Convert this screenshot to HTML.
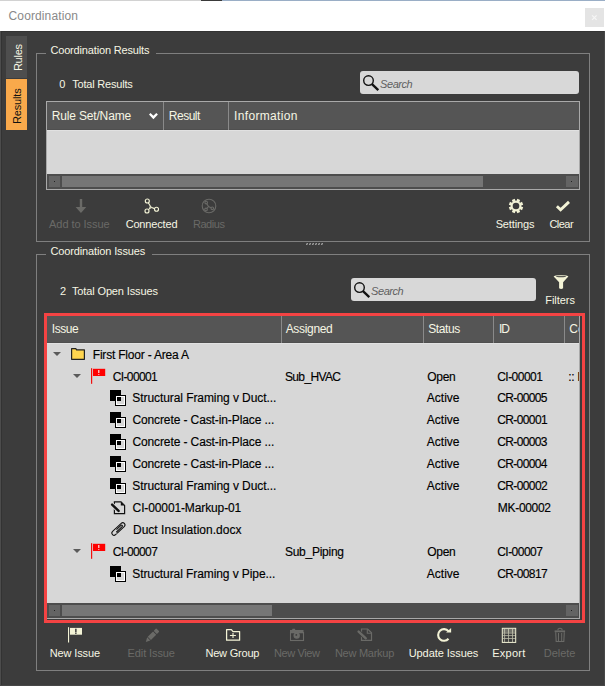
<!DOCTYPE html>
<html><head><meta charset="utf-8"><style>
html,body{margin:0;padding:0;width:605px;height:686px;overflow:hidden;background:#3c3c3c;}
.r{position:absolute;}
svg.r{overflow:visible;}
.t{position:absolute;font-family:"Liberation Sans",sans-serif;line-height:20px;white-space:pre;}
</style></head><body>
<div class="r" style="left:0px;top:0px;width:605px;height:31px;background:#ffffff;"></div>
<div class="r" style="left:0px;top:0px;width:201px;height:1px;background:#d2d2d2;"></div>
<div class="r" style="left:201px;top:0px;width:21px;height:1px;background:#3a3a3a;"></div>
<div class="r" style="left:222px;top:0px;width:383px;height:1px;background:#9aaec6;"></div>
<div class="r" style="left:585px;top:8px;width:19px;height:19px;background:#e4e4e4;"></div>
<svg class="r" style="left:585px;top:8px" width="19" height="19"><path d="M7.1 7.3 L11.6 11.8 M11.6 7.3 L7.1 11.8" stroke="#f6f6f6" stroke-width="1.2"/></svg>
<div class="r" style="left:0px;top:31px;width:605px;height:655px;background:#3c3c3c;"></div>
<div class="r" style="left:0px;top:31px;width:605px;height:1px;background:#333333;"></div>
<div class="r" style="left:0px;top:31px;width:1px;height:655px;background:#4c4c4c;"></div>
<div class="r" style="left:1px;top:32px;width:1px;height:654px;background:#333333;"></div>
<div class="r" style="left:604px;top:31px;width:1px;height:655px;background:#474747;"></div>
<div class="r" style="left:0px;top:685px;width:605px;height:1px;background:#474747;"></div>
<div class="r" style="left:6px;top:36px;width:21px;height:42px;background:#4e4e4e;"></div>
<div class="r" style="left:6px;top:79px;width:21px;height:51px;background:#f9a94b;"></div>
<div class="r" style="left:36px;top:53px;width:10px;height:1px;background:#7f7f7f;"></div>
<div class="r" style="left:156px;top:53px;width:434px;height:1px;background:#7f7f7f;"></div>
<div class="r" style="left:36px;top:53px;width:1px;height:189px;background:#7f7f7f;"></div>
<div class="r" style="left:589px;top:53px;width:1px;height:189px;background:#7f7f7f;"></div>
<div class="r" style="left:36px;top:241px;width:554px;height:1px;background:#7f7f7f;"></div>
<div class="r" style="left:36px;top:254px;width:10px;height:1px;background:#7f7f7f;"></div>
<div class="r" style="left:152px;top:254px;width:438px;height:1px;background:#7f7f7f;"></div>
<div class="r" style="left:36px;top:254px;width:1px;height:417px;background:#7f7f7f;"></div>
<div class="r" style="left:589px;top:254px;width:1px;height:417px;background:#7f7f7f;"></div>
<div class="r" style="left:36px;top:670px;width:554px;height:1px;background:#7f7f7f;"></div>
<div class="r" style="left:306px;top:243px;width:2px;height:2px;background:#6e6e6e;"></div>
<div class="r" style="left:307px;top:243px;width:1px;height:1px;background:#9a9a9a;"></div>
<div class="r" style="left:306px;top:244px;width:1px;height:1px;background:#9a9a9a;"></div>
<div class="r" style="left:309px;top:243px;width:2px;height:2px;background:#6e6e6e;"></div>
<div class="r" style="left:310px;top:243px;width:1px;height:1px;background:#9a9a9a;"></div>
<div class="r" style="left:309px;top:244px;width:1px;height:1px;background:#9a9a9a;"></div>
<div class="r" style="left:312px;top:243px;width:2px;height:2px;background:#6e6e6e;"></div>
<div class="r" style="left:313px;top:243px;width:1px;height:1px;background:#9a9a9a;"></div>
<div class="r" style="left:312px;top:244px;width:1px;height:1px;background:#9a9a9a;"></div>
<div class="r" style="left:315px;top:243px;width:2px;height:2px;background:#6e6e6e;"></div>
<div class="r" style="left:316px;top:243px;width:1px;height:1px;background:#9a9a9a;"></div>
<div class="r" style="left:315px;top:244px;width:1px;height:1px;background:#9a9a9a;"></div>
<div class="r" style="left:318px;top:243px;width:2px;height:2px;background:#6e6e6e;"></div>
<div class="r" style="left:319px;top:243px;width:1px;height:1px;background:#9a9a9a;"></div>
<div class="r" style="left:318px;top:244px;width:1px;height:1px;background:#9a9a9a;"></div>
<div class="r" style="left:321px;top:243px;width:2px;height:2px;background:#6e6e6e;"></div>
<div class="r" style="left:322px;top:243px;width:1px;height:1px;background:#9a9a9a;"></div>
<div class="r" style="left:321px;top:244px;width:1px;height:1px;background:#9a9a9a;"></div>
<div class="r" style="left:360px;top:71px;width:219px;height:23px;background:#d8d8d8;border-radius:3px;"></div>
<svg class="r" style="left:360px;top:71px" width="24" height="23"><circle cx="8.5" cy="9.6" r="4.8" fill="none" stroke="#111" stroke-width="1.4"/><path d="M12 13.2 L18.3 19.2" stroke="#111" stroke-width="2.3" stroke-linecap="butt"/></svg>
<div class="r" style="left:351px;top:278px;width:185px;height:23px;background:#d8d8d8;border-radius:3px;"></div>
<svg class="r" style="left:351px;top:278px" width="24" height="23"><circle cx="8.5" cy="9.6" r="4.8" fill="none" stroke="#111" stroke-width="1.4"/><path d="M12 13.2 L18.3 19.2" stroke="#111" stroke-width="2.3" stroke-linecap="butt"/></svg>
<div class="r" style="left:46px;top:101px;width:534px;height:1px;background:#a9a9a9;"></div>
<div class="r" style="left:46px;top:189px;width:534px;height:1px;background:#a9a9a9;"></div>
<div class="r" style="left:46px;top:101px;width:1px;height:89px;background:#a9a9a9;"></div>
<div class="r" style="left:579px;top:101px;width:1px;height:89px;background:#a9a9a9;"></div>
<div class="r" style="left:47px;top:102px;width:532px;height:28px;background:#555555;"></div>
<div class="r" style="left:47px;top:130px;width:532px;height:44px;background:#d7d7d7;"></div>
<div class="r" style="left:47px;top:130px;width:532px;height:1px;background:#e1e1e1;"></div>
<div class="r" style="left:47px;top:129px;width:532px;height:1px;background:#4f4f4f;"></div>
<div class="r" style="left:47px;top:174px;width:532px;height:15px;background:#4d4d4d;"></div>
<div class="r" style="left:49px;top:176px;width:11px;height:11px;background:#646464;"></div>
<div class="r" style="left:54px;top:181px;width:1px;height:1px;background:#222;"></div>
<div class="r" style="left:62px;top:176px;width:421px;height:11px;background:#767676;"></div>
<div class="r" style="left:566px;top:176px;width:12px;height:11px;background:#646464;"></div>
<div class="r" style="left:571px;top:181px;width:1px;height:1px;background:#222;"></div>
<div class="r" style="left:163px;top:102px;width:1px;height:28px;background:#8a8a8a;"></div>
<div class="r" style="left:228px;top:102px;width:1px;height:28px;background:#8a8a8a;"></div>
<svg class="r" style="left:144px;top:108px" width="20" height="16"><path d="M5 6.5 L6.5 5 L9.4 7.8 L12.3 5 L13.9 6.5 L9.4 11.2 Z" fill="#fff"/></svg>
<div class="r" style="left:46px;top:315px;width:534px;height:1px;background:#a9a9a9;"></div>
<div class="r" style="left:46px;top:618px;width:534px;height:1px;background:#a9a9a9;"></div>
<div class="r" style="left:46px;top:315px;width:1px;height:304px;background:#a9a9a9;"></div>
<div class="r" style="left:579px;top:315px;width:1px;height:304px;background:#a9a9a9;"></div>
<div class="r" style="left:47px;top:316px;width:532px;height:27px;background:#555555;"></div>
<div class="r" style="left:47px;top:343px;width:532px;height:260px;background:#d7d7d7;"></div>
<div class="r" style="left:47px;top:343px;width:532px;height:1px;background:#e1e1e1;"></div>
<div class="r" style="left:47px;top:342px;width:532px;height:1px;background:#4f4f4f;"></div>
<div class="r" style="left:47px;top:603px;width:532px;height:15px;background:#4d4d4d;"></div>
<div class="r" style="left:49px;top:605px;width:11px;height:11px;background:#646464;"></div>
<div class="r" style="left:54px;top:610px;width:1px;height:1px;background:#222;"></div>
<div class="r" style="left:62px;top:605px;width:210px;height:11px;background:#767676;"></div>
<div class="r" style="left:566px;top:605px;width:12px;height:11px;background:#646464;"></div>
<div class="r" style="left:571px;top:610px;width:1px;height:1px;background:#222;"></div>
<div class="r" style="left:281px;top:316px;width:1px;height:27px;background:#8a8a8a;"></div>
<div class="r" style="left:423px;top:316px;width:1px;height:27px;background:#8a8a8a;"></div>
<div class="r" style="left:493px;top:316px;width:1px;height:27px;background:#8a8a8a;"></div>
<div class="r" style="left:564px;top:316px;width:1px;height:27px;background:#8a8a8a;"></div>
<div class="r" style="left:44px;top:313px;width:541px;height:3px;background:#f44343;"></div>
<div class="r" style="left:44px;top:620px;width:541px;height:3px;background:#f44343;"></div>
<div class="r" style="left:44px;top:313px;width:3px;height:310px;background:#f44343;"></div>
<div class="r" style="left:582px;top:313px;width:3px;height:310px;background:#f44343;"></div>
<div class="r" style="left:580px;top:316px;width:2px;height:304px;background:#3c3c3c;"></div>
<div class="r" style="left:47px;top:619px;width:535px;height:1px;background:#3c3c3c;"></div>
<svg class="r" style="left:74px;top:198px" width="14" height="17"><rect x="5.8" y="1" width="2.4" height="8.5" fill="#6a6a67"/><path d="M1.6 9.1 H12.3 L6.95 15 Z" fill="#6a6a67"/></svg>
<svg class="r" style="left:143px;top:198px" width="17" height="17"><g fill="none" stroke="#f3f3d6" stroke-width="1.15"><circle cx="4.3" cy="3" r="2"/><circle cx="4" cy="13" r="2"/><circle cx="13.5" cy="11.2" r="2"/><path d="M5.3 4.8 L7.4 8.2 M5.4 11.6 L7.4 9.9 M8.6 9.5 L11.6 10.6"/><path d="M7.4 8 L8.8 9.6 L6.8 10 Z" stroke-width="1"/></g></svg>
<svg class="r" style="left:201px;top:198px" width="17" height="17"><g fill="none" stroke="#6a6a67" stroke-width="1.1"><circle cx="8" cy="8" r="6.8"/><circle cx="5.2" cy="4.6" r="1.3"/><circle cx="5" cy="11.4" r="1.3"/><circle cx="11.3" cy="10.3" r="1.3"/><path d="M5.8 5.8 L7.5 8.5 L10.1 9.8 M7.5 8.5 L5.9 10.5"/></g></svg>
<svg class="r" style="left:508px;top:198px" width="16" height="16"><path d="M13.27 8.54 L15.18 9.33 L14.01 12.14 L12.11 11.34 L11.34 12.11 L12.14 14.01 L9.33 15.18 L8.54 13.27 L7.46 13.27 L6.67 15.18 L3.86 14.01 L4.66 12.11 L3.89 11.34 L1.99 12.14 L0.82 9.33 L2.73 8.54 L2.73 7.46 L0.82 6.67 L1.99 3.86 L3.89 4.66 L4.66 3.89 L3.86 1.99 L6.67 0.82 L7.46 2.73 L8.54 2.73 L9.33 0.82 L12.14 1.99 L11.34 3.89 L12.11 4.66 L14.01 3.86 L15.18 6.67 L13.27 7.46 Z" fill="#f3f3d6"/><circle cx="8" cy="8" r="3.3" fill="#3c3c3c"/></svg>
<svg class="r" style="left:554px;top:199px" width="18" height="14"><path d="M2.9 7.3 L6.6 10.8 L15 2.9" fill="none" stroke="#f3f3d6" stroke-width="2.9"/></svg>
<svg class="r" style="left:553px;top:275px" width="16" height="16"><path d="M0.7 1.6 L6.1 7.2 V13.2 Q8.1 14.6 10.1 13.2 V7.2 L15.3 1.6 Z" fill="#f3f3d6"/><ellipse cx="8" cy="1.5" rx="7.3" ry="1.5" fill="#f3f3d6"/><ellipse cx="8" cy="1.6" rx="5.2" ry="0.75" fill="#3c3c3c" opacity="0.85"/></svg>
<svg class="r" style="left:53px;top:352px" width="9" height="5"><path d="M0 0 H8 L4 4 Z" fill="#5a5a5a"/></svg>
<svg class="r" style="left:73px;top:374px" width="9" height="5"><path d="M0 0 H8 L4 4 Z" fill="#5a5a5a"/></svg>
<svg class="r" style="left:73px;top:549px" width="9" height="5"><path d="M0 0 H8 L4 4 Z" fill="#5a5a5a"/></svg>
<svg class="r" style="left:70px;top:348px" width="16" height="13"><path d="M1.6 0.6 H5.8 L6.6 1.8 H14.4 V11.3 H1.6 Z" fill="#ffd54f" stroke="#222" stroke-width="1.2" stroke-linejoin="round"/></svg>
<svg class="r" style="left:91px;top:368px" width="16" height="16"><rect x="0" y="0.2" width="1.2" height="15.6" fill="#f01010"/><rect x="2" y="0.8" width="12.2" height="7.2" fill="#ff0000"/><rect x="7.1" y="2" width="1.3" height="3" fill="#fff" opacity="0.8"/><rect x="7.1" y="6.1" width="1.3" height="0.9" fill="#fff" opacity="0.7"/></svg>
<svg class="r" style="left:91px;top:543px" width="16" height="16"><rect x="0" y="0.2" width="1.2" height="15.6" fill="#f01010"/><rect x="2" y="0.8" width="12.2" height="7.2" fill="#ff0000"/><rect x="7.1" y="2" width="1.3" height="3" fill="#fff" opacity="0.8"/><rect x="7.1" y="6.1" width="1.3" height="0.9" fill="#fff" opacity="0.7"/></svg>
<svg class="r" style="left:110px;top:390px" width="17" height="17"><rect x="0" y="0" width="11" height="11" fill="#000"/><rect x="5.5" y="5.5" width="10" height="10" fill="none" stroke="#000" stroke-width="1"/><rect x="6.5" y="6.5" width="8" height="8" fill="none" stroke="#fff" stroke-width="1"/><rect x="7" y="7" width="4" height="4" fill="#000"/></svg>
<svg class="r" style="left:110px;top:412px" width="17" height="17"><rect x="0" y="0" width="11" height="11" fill="#000"/><rect x="5.5" y="5.5" width="10" height="10" fill="none" stroke="#000" stroke-width="1"/><rect x="6.5" y="6.5" width="8" height="8" fill="none" stroke="#fff" stroke-width="1"/><rect x="7" y="7" width="4" height="4" fill="#000"/></svg>
<svg class="r" style="left:110px;top:434px" width="17" height="17"><rect x="0" y="0" width="11" height="11" fill="#000"/><rect x="5.5" y="5.5" width="10" height="10" fill="none" stroke="#000" stroke-width="1"/><rect x="6.5" y="6.5" width="8" height="8" fill="none" stroke="#fff" stroke-width="1"/><rect x="7" y="7" width="4" height="4" fill="#000"/></svg>
<svg class="r" style="left:110px;top:456px" width="17" height="17"><rect x="0" y="0" width="11" height="11" fill="#000"/><rect x="5.5" y="5.5" width="10" height="10" fill="none" stroke="#000" stroke-width="1"/><rect x="6.5" y="6.5" width="8" height="8" fill="none" stroke="#fff" stroke-width="1"/><rect x="7" y="7" width="4" height="4" fill="#000"/></svg>
<svg class="r" style="left:110px;top:478px" width="17" height="17"><rect x="0" y="0" width="11" height="11" fill="#000"/><rect x="5.5" y="5.5" width="10" height="10" fill="none" stroke="#000" stroke-width="1"/><rect x="6.5" y="6.5" width="8" height="8" fill="none" stroke="#fff" stroke-width="1"/><rect x="7" y="7" width="4" height="4" fill="#000"/></svg>
<svg class="r" style="left:110px;top:566px" width="17" height="17"><rect x="0" y="0" width="11" height="11" fill="#000"/><rect x="5.5" y="5.5" width="10" height="10" fill="none" stroke="#000" stroke-width="1"/><rect x="6.5" y="6.5" width="8" height="8" fill="none" stroke="#fff" stroke-width="1"/><rect x="7" y="7" width="4" height="4" fill="#000"/></svg>
<svg class="r" style="left:110px;top:500px" width="17" height="16"><path d="M4.4 1.8 H11 L14.6 5.4 V13.6 H4.4 Z" fill="none" stroke="#111" stroke-width="1.2"/><path d="M10.8 1.9 V5.6 H14.5 Z" fill="#111"/><path d="M2.1 4.6 L8.6 10.9" stroke="#d7d7d7" stroke-width="4.2"/><path d="M2.1 4.6 L8.6 10.9" stroke="#111" stroke-width="2.4" stroke-linecap="round"/></svg>
<svg class="r" style="left:110px;top:522px" width="17" height="16"><g transform="translate(8.4,7) rotate(-43)" fill="none" stroke="#111" stroke-width="1.05"><path d="M-4 2.2 H5.9 A2.2 2.2 0 0 0 5.9 -2.2 H-5.9 A2.2 2.2 0 0 0 -5.9 2.2 H-4.5"/><path d="M-3.8 0.9 H4.3 A0.9 0.9 0 0 0 4.3 -0.9 H-1.8"/></g></svg>
<svg class="r" style="left:67px;top:627px" width="17" height="16"><rect x="1" y="0.2" width="1.1" height="15.3" fill="#f3f3d6"/><rect x="3" y="0.9" width="12" height="6.8" fill="#f3f3d6"/><rect x="8.1" y="1.7" width="1.5" height="3.7" fill="#3c3c3c"/><rect x="8.1" y="5.8" width="1.5" height="1.1" fill="#3c3c3c"/></svg>
<svg class="r" style="left:142px;top:624px" width="20" height="20"><g transform="translate(3.8,17.9) rotate(-45)" fill="#6a6a67"><path d="M0 0 L4.2 -2.25 V2.25 Z"/><rect x="5" y="-2.25" width="7.5" height="4.5"/><rect x="13.3" y="-2.25" width="3.6" height="4.5" rx="0.6"/></g></svg>
<svg class="r" style="left:225px;top:628px" width="17" height="15"><path d="M1.6 1.6 H6.4 L8 3.6 H14.6 V12.2 H1.6 Z" fill="none" stroke="#f3f3d6" stroke-width="1.25" stroke-linejoin="round"/><path d="M4.9 7.5 H10.9 M8 5 V10" stroke="#f3f3d6" stroke-width="1.1"/></svg>
<svg class="r" style="left:289px;top:627px" width="17" height="16"><path d="M1 3 H3 L3.6 1.8 H5.8 L6.4 3 H14.5 V6.3 H1 Z" fill="#6a6a67"/><rect x="1.5" y="5.5" width="13" height="8" fill="none" stroke="#6a6a67" stroke-width="1.1"/><circle cx="7.7" cy="8.6" r="3.2" fill="#6a6a67"/><circle cx="7.3" cy="7.9" r="0.9" fill="#3c3c3c"/></svg>
<svg class="r" style="left:357px;top:627px" width="17" height="16"><path d="M4.5 2 H10.7 L14.5 5.8 V13.4 H4.5 Z" fill="none" stroke="#6a6a67" stroke-width="1.2"/><path d="M10.3 2.3 V6.2 H14.2" fill="none" stroke="#6a6a67" stroke-width="1.1"/><path d="M1.6 4.6 L8.8 11.3" stroke="#3c3c3c" stroke-width="4"/><path d="M1.6 4.6 L8.8 11.3" stroke="#6a6a67" stroke-width="2.4" stroke-linecap="round"/></svg>
<svg class="r" style="left:436px;top:628px" width="17" height="15"><path d="M12.48 3.19 A5.85 5.85 0 1 0 12.48 10.71" fill="none" stroke="#f3f3d6" stroke-width="2.1"/><path d="M10.1 4.6 L15.1 4.6 L15.1 0.1 Z" fill="#f3f3d6"/></svg>
<svg class="r" style="left:501px;top:627px" width="17" height="16"><rect x="1.3" y="1.3" width="13.4" height="14.1" fill="none" stroke="#f3f3d6" stroke-width="1"/><rect x="1.8" y="1.8" width="12.4" height="3.8" fill="#f3f3d6" opacity="0.3"/><path d="M1.8 6.1 H14.5 M1.8 8.6 H14.5 M1.8 11.5 H14.5 M3.6 1.8 V15 M7.5 1.8 V15 M11.5 1.8 V15" stroke="#f3f3d6" stroke-width="0.8" opacity="0.7"/></svg>
<svg class="r" style="left:553px;top:627px" width="14" height="17"><path d="M1.6 4.3 H12.1" stroke="#6a6a67" stroke-width="1.8"/><path d="M5 3.3 V2.2 Q7 0.4 9 2.2 V3.3" fill="none" stroke="#6a6a67" stroke-width="1.1"/><path d="M2.7 5.3 L3.2 14.5 H10.8 L11.3 5.3" fill="none" stroke="#6a6a67" stroke-width="1.1"/><path d="M5.5 6 V14 M8.7 6 V14" stroke="#6a6a67" stroke-width="1"/></svg>
<div class="t" style="left:8.60px;top:6.00px;font-size:12px;color:#898989;letter-spacing:0.112px;">Coordination</div>
<div class="t" style="left:50.45px;top:40.00px;font-size:11px;color:#f6f6e4;letter-spacing:-0.165px;">Coordination Results</div>
<div class="t" style="left:59.23px;top:74.00px;font-size:11px;color:#f6f6e4;">0</div>
<div class="t" style="left:72.22px;top:74.00px;font-size:11px;color:#f6f6e4;letter-spacing:-0.202px;">Total Results</div>
<div class="t" style="left:51.76px;top:106.00px;font-size:12px;color:#f6f6e4;letter-spacing:-0.165px;">Rule Set/Name</div>
<div class="t" style="left:168.86px;top:106.00px;font-size:12px;color:#f6f6e4;letter-spacing:-0.516px;">Result</div>
<div class="t" style="left:234.08px;top:106.00px;font-size:12px;color:#f6f6e4;letter-spacing:0.322px;">Information</div>
<div class="t" style="left:49.10px;top:214.00px;font-size:11px;color:#6a6a67;letter-spacing:-0.059px;">Add to Issue</div>
<div class="t" style="left:125.65px;top:214.00px;font-size:11px;color:#f6f6e4;letter-spacing:-0.167px;">Connected</div>
<div class="t" style="left:192.88px;top:214.00px;font-size:11px;color:#6a6a67;letter-spacing:-0.426px;">Radius</div>
<div class="t" style="left:495.64px;top:214.00px;font-size:11px;color:#f6f6e4;letter-spacing:-0.139px;">Settings</div>
<div class="t" style="left:549.45px;top:214.00px;font-size:11px;color:#f6f6e4;letter-spacing:-0.523px;">Clear</div>
<div class="t" style="left:50.45px;top:241.00px;font-size:11px;color:#f6f6e4;letter-spacing:-0.130px;">Coordination Issues</div>
<div class="t" style="left:59.95px;top:280.50px;font-size:11px;color:#f6f6e4;">2</div>
<div class="t" style="left:71.92px;top:280.50px;font-size:11px;color:#f6f6e4;letter-spacing:-0.125px;">Total Open Issues</div>
<div class="t" style="left:545.28px;top:290.00px;font-size:11px;color:#f6f6e4;letter-spacing:-0.039px;">Filters</div>
<div class="t" style="left:51.78px;top:319.00px;font-size:12px;color:#f6f6e4;letter-spacing:-0.467px;">Issue</div>
<div class="t" style="left:285.70px;top:319.00px;font-size:12px;color:#f6f6e4;letter-spacing:-0.327px;">Assigned</div>
<div class="t" style="left:428.18px;top:319.00px;font-size:12px;color:#f6f6e4;letter-spacing:-0.376px;">Status</div>
<div class="t" style="left:498.88px;top:319.00px;font-size:12px;color:#f6f6e4;letter-spacing:-1.014px;">ID</div>
<div class="t" style="left:569.30px;top:319.00px;font-size:12px;color:#f6f6e4;width:9.70px;overflow:hidden;">Co</div>
<div class="t" style="left:92.76px;top:344.60px;font-size:12px;color:#000000;letter-spacing:-0.196px;-webkit-text-stroke:0.15px #000;">First Floor - Area A</div>
<div class="t" style="left:112.80px;top:366.52px;font-size:12px;color:#000000;letter-spacing:-0.644px;-webkit-text-stroke:0.15px #000;">CI-00001</div>
<div class="t" style="left:284.88px;top:366.52px;font-size:12px;color:#000000;letter-spacing:-0.616px;-webkit-text-stroke:0.15px #000;">Sub_HVAC</div>
<div class="t" style="left:427.28px;top:366.52px;font-size:12px;color:#000000;letter-spacing:-0.301px;-webkit-text-stroke:0.15px #000;">Open</div>
<div class="t" style="left:497.20px;top:366.52px;font-size:12px;color:#000000;letter-spacing:-0.530px;-webkit-text-stroke:0.15px #000;">CI-00001</div>
<div class="t" style="left:568.28px;top:366.52px;font-size:12px;color:#000000;letter-spacing:-0.334px;-webkit-text-stroke:0.15px #000;width:10.72px;overflow:hidden;">:: I</div>
<div class="t" style="left:132.28px;top:388.44px;font-size:12px;color:#000000;letter-spacing:-0.074px;-webkit-text-stroke:0.15px #000;">Structural Framing v Duct...</div>
<div class="t" style="left:426.80px;top:388.44px;font-size:12px;color:#000000;letter-spacing:0.011px;-webkit-text-stroke:0.15px #000;">Active</div>
<div class="t" style="left:497.20px;top:388.44px;font-size:12px;color:#000000;letter-spacing:-0.623px;-webkit-text-stroke:0.15px #000;">CR-00005</div>
<div class="t" style="left:132.40px;top:410.36px;font-size:12px;color:#000000;letter-spacing:-0.106px;-webkit-text-stroke:0.15px #000;">Concrete - Cast-in-Place ...</div>
<div class="t" style="left:426.80px;top:410.36px;font-size:12px;color:#000000;letter-spacing:0.011px;-webkit-text-stroke:0.15px #000;">Active</div>
<div class="t" style="left:497.20px;top:410.36px;font-size:12px;color:#000000;letter-spacing:-0.606px;-webkit-text-stroke:0.15px #000;">CR-00001</div>
<div class="t" style="left:132.40px;top:432.28px;font-size:12px;color:#000000;letter-spacing:-0.106px;-webkit-text-stroke:0.15px #000;">Concrete - Cast-in-Place ...</div>
<div class="t" style="left:426.80px;top:432.28px;font-size:12px;color:#000000;letter-spacing:0.011px;-webkit-text-stroke:0.15px #000;">Active</div>
<div class="t" style="left:497.20px;top:432.28px;font-size:12px;color:#000000;letter-spacing:-0.623px;-webkit-text-stroke:0.15px #000;">CR-00003</div>
<div class="t" style="left:132.40px;top:454.20px;font-size:12px;color:#000000;letter-spacing:-0.106px;-webkit-text-stroke:0.15px #000;">Concrete - Cast-in-Place ...</div>
<div class="t" style="left:426.80px;top:454.20px;font-size:12px;color:#000000;letter-spacing:0.011px;-webkit-text-stroke:0.15px #000;">Active</div>
<div class="t" style="left:497.20px;top:454.20px;font-size:12px;color:#000000;letter-spacing:-0.640px;-webkit-text-stroke:0.15px #000;">CR-00004</div>
<div class="t" style="left:132.28px;top:476.12px;font-size:12px;color:#000000;letter-spacing:-0.074px;-webkit-text-stroke:0.15px #000;">Structural Framing v Duct...</div>
<div class="t" style="left:426.80px;top:476.12px;font-size:12px;color:#000000;letter-spacing:0.011px;-webkit-text-stroke:0.15px #000;">Active</div>
<div class="t" style="left:497.20px;top:476.12px;font-size:12px;color:#000000;letter-spacing:-0.606px;-webkit-text-stroke:0.15px #000;">CR-00002</div>
<div class="t" style="left:132.60px;top:498.04px;font-size:12px;color:#000000;letter-spacing:-0.121px;-webkit-text-stroke:0.15px #000;">CI-00001-Markup-01</div>
<div class="t" style="left:497.86px;top:498.04px;font-size:12px;color:#000000;letter-spacing:-0.322px;-webkit-text-stroke:0.15px #000;">MK-00002</div>
<div class="t" style="left:132.96px;top:519.96px;font-size:12px;color:#000000;letter-spacing:0.027px;-webkit-text-stroke:0.15px #000;">Duct Insulation.docx</div>
<div class="t" style="left:112.80px;top:541.88px;font-size:12px;color:#000000;letter-spacing:-0.616px;-webkit-text-stroke:0.15px #000;">CI-00007</div>
<div class="t" style="left:284.88px;top:541.88px;font-size:12px;color:#000000;letter-spacing:-0.248px;-webkit-text-stroke:0.15px #000;">Sub_Piping</div>
<div class="t" style="left:427.28px;top:541.88px;font-size:12px;color:#000000;letter-spacing:-0.301px;-webkit-text-stroke:0.15px #000;">Open</div>
<div class="t" style="left:497.20px;top:541.88px;font-size:12px;color:#000000;letter-spacing:-0.530px;-webkit-text-stroke:0.15px #000;">CI-00007</div>
<div class="t" style="left:132.28px;top:563.80px;font-size:12px;color:#000000;letter-spacing:-0.087px;-webkit-text-stroke:0.15px #000;">Structural Framing v Pipe...</div>
<div class="t" style="left:426.80px;top:563.80px;font-size:12px;color:#000000;letter-spacing:0.011px;-webkit-text-stroke:0.15px #000;">Active</div>
<div class="t" style="left:497.20px;top:563.80px;font-size:12px;color:#000000;letter-spacing:-0.606px;-webkit-text-stroke:0.15px #000;">CR-00817</div>
<div class="t" style="left:49.68px;top:642.50px;font-size:11px;color:#f6f6e4;letter-spacing:-0.122px;">New Issue</div>
<div class="t" style="left:127.58px;top:642.50px;font-size:11px;color:#6a6a67;letter-spacing:-0.103px;">Edit Issue</div>
<div class="t" style="left:205.48px;top:642.50px;font-size:11px;color:#f6f6e4;letter-spacing:-0.207px;">New Group</div>
<div class="t" style="left:273.88px;top:642.50px;font-size:11px;color:#6a6a67;letter-spacing:-0.373px;">New View</div>
<div class="t" style="left:334.88px;top:642.50px;font-size:11px;color:#6a6a67;letter-spacing:-0.263px;">New Markup</div>
<div class="t" style="left:408.67px;top:642.50px;font-size:11px;color:#f6f6e4;letter-spacing:-0.052px;">Update Issues</div>
<div class="t" style="left:492.28px;top:642.50px;font-size:11px;color:#f6f6e4;letter-spacing:0.253px;">Export</div>
<div class="t" style="left:543.78px;top:642.50px;font-size:11px;color:#6a6a67;letter-spacing:-0.044px;">Delete</div>
<div class="t" style="left:380.12px;top:73.80px;font-size:11px;color:#606060;letter-spacing:-0.467px;font-style:italic;">Search</div>
<div class="t" style="left:371.12px;top:280.50px;font-size:11px;color:#606060;letter-spacing:-0.467px;font-style:italic;">Search</div>
<div class="t" style="left:22.58px;top:58.00px;font-size:11px;letter-spacing:-0.228px;color:#f6f6e4;transform:rotate(-90deg);transform-origin:-0.88px 14px;">Rules</div>
<div class="t" style="left:22.38px;top:110.60px;font-size:11px;letter-spacing:-0.145px;color:#111;transform:rotate(-90deg);transform-origin:-0.88px 14px;">Results</div>
</body></html>
